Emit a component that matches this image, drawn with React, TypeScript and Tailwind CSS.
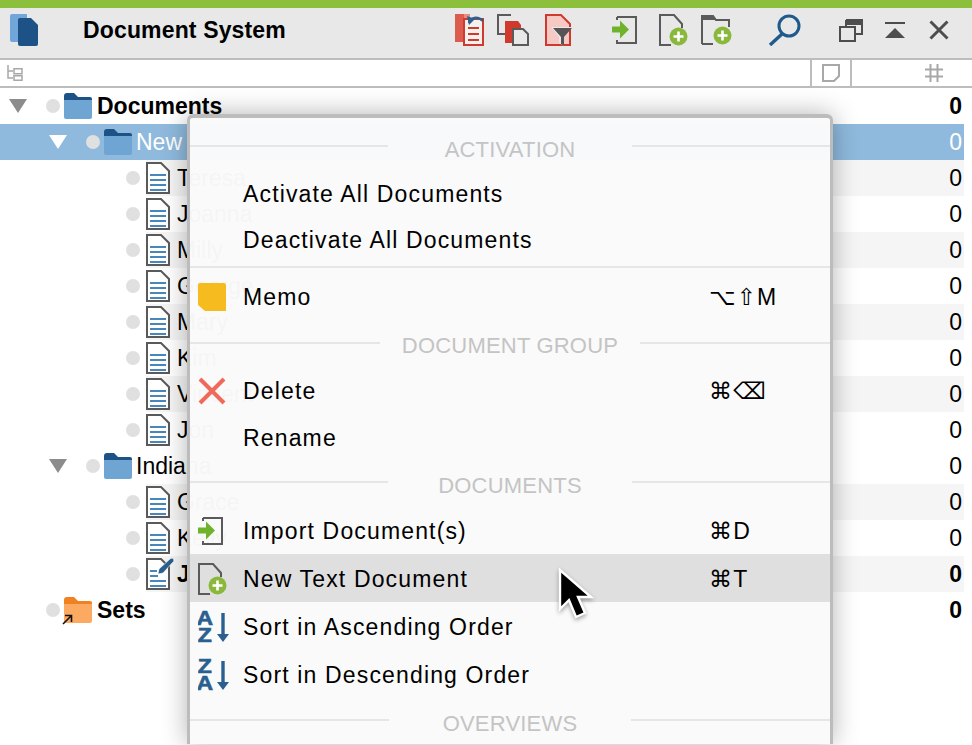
import type { ReactNode } from "react";

const FONT = "font-['Liberation_Sans','DejaVu_Sans',sans-serif]";

type Row = {
  name: string;
  kind: "folder" | "doc" | "memoDoc" | "sets";
  depth: 0 | 1 | 2;
  bold?: boolean;
  stripe?: boolean;
  selected?: boolean;
};

const rows: Row[] = [
  { name: "Documents", kind: "folder", depth: 0, bold: true },
  { name: "New", kind: "folder", depth: 1, selected: true },
  { name: "Teresa", kind: "doc", depth: 2, stripe: true },
  { name: "Joanna", kind: "doc", depth: 2 },
  { name: "Milly", kind: "doc", depth: 2, stripe: true },
  { name: "George", kind: "doc", depth: 2 },
  { name: "Mary", kind: "doc", depth: 2, stripe: true },
  { name: "Kim", kind: "doc", depth: 2 },
  { name: "Vincent", kind: "doc", depth: 2, stripe: true },
  { name: "Jon", kind: "doc", depth: 2 },
  { name: "Indiana", kind: "folder", depth: 1 },
  { name: "Grace", kind: "doc", depth: 2, stripe: true },
  { name: "Kelly", kind: "doc", depth: 2 },
  { name: "Jack", kind: "memoDoc", depth: 2, bold: true, stripe: true },
  { name: "Sets", kind: "sets", depth: 0, bold: true },
];

function PlusBadge({ cx, cy }: { cx: number; cy: number }) {
  return (
    <g>
      <circle cx={cx} cy={cy} r="9" fill="#8ab83c" />
      <path d={`M${cx - 5} ${cy}h10M${cx} ${cy - 5}v10`} stroke="#fff" strokeWidth="2.6" />
    </g>
  );
}

function LogoIcon() {
  return (
    <svg width="28" height="32" viewBox="0 0 28 32">
      <path d="M0 2a2 2 0 0 1 2-2h15v28H2a2 2 0 0 1-2-2z" fill="#70a7d8" />
      <path d="M8 6a2 2 0 0 1 2-2h11l7 7v19a2 2 0 0 1-2 2H10a2 2 0 0 1-2-2z" fill="#1c5285" />
    </svg>
  );
}

function RestoreIcon() {
  return (
    <svg width="30" height="32" viewBox="0 0 30 32">
      <rect x="0" y="0" width="9" height="28" fill="#dc5a4e" />
      <path d="M9 0h6v6H9z" fill="#e88a80" />
      <path d="M9 5h19v26H9z" fill="#f4f0ef" stroke="#cf3a2c" strokeWidth="2" />
      <path d="M13 14h11M13 20h11M13 26h11" stroke="#cf3a2c" strokeWidth="2" />
      <path d="M14 9c1-6 9-7 14-2" fill="none" stroke="#2a5f8f" strokeWidth="2.4" />
      <path d="M12 2l8 3-6 6z" fill="#2a5f8f" />
    </svg>
  );
}

function CopyIcon() {
  return (
    <svg width="32" height="32" viewBox="0 0 32 32">
      <path d="M14 1H1v19h7" fill="none" stroke="#5a5a5a" strokeWidth="2" />
      <path d="M8 7h13l3 4v4h-9v14H8z" fill="#cf3a2c" />
      <path d="M16 15h10l5 5v11H16z" fill="#e8e8e8" stroke="#5a5a5a" strokeWidth="2" />
    </svg>
  );
}

function FilterDocIcon() {
  return (
    <svg width="27" height="32" viewBox="0 0 27 32">
      <path d="M1 1h15l9 9v21H1z" fill="#f6c9c4" stroke="#cf3a2c" strokeWidth="2" />
      <path d="M6 13h21l-8 10v9l-5-3v-6z" fill="#e8e8e8" />
      <path d="M8 14h19l-8 9v9l-3-2v-7z" fill="#555" />
    </svg>
  );
}

function ImportIcon() {
  return (
    <svg width="25" height="28" viewBox="0 0 25 28">
      <path d="M5 1h19v26H5v-3M5 1v3" fill="none" stroke="#5a5a5a" strokeWidth="2" />
      <path d="M0 11h8V5l9 9-9 9v-6H0z" fill="#6fb32c" transform="translate(0 -0.5)" />
    </svg>
  );
}

function NewDocIcon() {
  return (
    <svg width="29" height="32" viewBox="0 0 29 32">
      <path d="M12 31H1V1h14l8 9v4" fill="none" stroke="#5a5a5a" strokeWidth="2" />
      <PlusBadge cx={19.5} cy={22.5} />
    </svg>
  );
}

function NewFolderIcon() {
  return (
    <svg width="31" height="30" viewBox="0 0 31 30">
      <path d="M1 29V1h11l3 4h13v7" fill="none" stroke="#5a5a5a" strokeWidth="2" />
      <path d="M1 1h11l3 4H1z" fill="#5a5a5a" />
      <path d="M1 29h11" stroke="#5a5a5a" strokeWidth="2" />
      <PlusBadge cx={21.5} cy={20.5} />
    </svg>
  );
}

function SearchIcon() {
  return (
    <svg width="34" height="32" viewBox="0 0 34 32">
      <circle cx="21" cy="12" r="10" fill="none" stroke="#1f5a8c" strokeWidth="3" />
      <path d="M14 20L2 31" stroke="#1f5a8c" strokeWidth="3.4" />
    </svg>
  );
}

function WindowIcon() {
  return (
    <svg width="24" height="23" viewBox="0 0 24 23">
      <path d="M7 1h16v14H16" fill="#e8e8e8" stroke="#4d4d4d" strokeWidth="2" />
      <path d="M7 1v7" stroke="#4d4d4d" strokeWidth="2" />
      <path d="M1 8h15v14H1z" fill="none" stroke="#4d4d4d" strokeWidth="2" />
      <path d="M7 2h16v4H7z" fill="#4d4d4d" />
    </svg>
  );
}

function CollapseIcon() {
  return (
    <svg width="20" height="17" viewBox="0 0 20 17">
      <path d="M0 1h20" stroke="#4d4d4d" strokeWidth="2" />
      <path d="M10 6l10 10H0z" fill="#4d4d4d" />
    </svg>
  );
}

function CloseIcon() {
  return (
    <svg width="20" height="20" viewBox="0 0 20 20">
      <path d="M1.5 1.5l17 17M18.5 1.5l-17 17" stroke="#4d4d4d" strokeWidth="3" />
    </svg>
  );
}

function TreeHeaderIcon() {
  return (
    <svg width="16" height="16" viewBox="0 0 16 16">
      <path d="M1 0v13h5M1 6h5" fill="none" stroke="#a8a8a8" strokeWidth="1.5" />
      <path d="M7 3.7h8v5H7zM7 10.7h8v4.6H7z" fill="none" stroke="#a8a8a8" strokeWidth="1.5" />
    </svg>
  );
}

function NoteHeaderIcon() {
  return (
    <svg width="18" height="18" viewBox="0 0 18 18">
      <path d="M1 1h16v11l-5 5H1z" fill="none" stroke="#a8a8a8" strokeWidth="2" />
    </svg>
  );
}

function HashHeaderIcon() {
  return (
    <svg width="18" height="18" viewBox="0 0 18 18">
      <path d="M5.5 0v18M12.5 0v18M0 5.5h18M0 12.5h18" stroke="#a8a8a8" strokeWidth="2" />
    </svg>
  );
}

function FolderIcon({ back = "#1c5285", front = "#6fa5d3" }: { back?: string; front?: string }) {
  return (
    <svg width="28" height="26" viewBox="0 0 28 26" className="shrink-0">
      <path d="M0 3a3 3 0 0 1 3-3h7l4 4h12a2 2 0 0 1 2 2v4H0z" fill={back} />
      <path d="M0 7h28v17a2 2 0 0 1-2 2H2a2 2 0 0 1-2-2z" fill={front} />
    </svg>
  );
}

function SetsIcon() {
  return (
    <div className="relative shrink-0">
      <FolderIcon back="#ef8120" front="#fca961" />
      <svg width="11" height="11" viewBox="0 0 11 11" className="absolute left-[-2px] top-[17px]">
        <path d="M1 10L9 2M3 1.5h6.5V8" fill="none" stroke="#111" strokeWidth="1.6" />
      </svg>
    </div>
  );
}

function DocIcon() {
  return (
    <svg width="24" height="32" viewBox="0 0 24 32" className="shrink-0">
      <path d="M1 1h14l8 8v22H1z" fill="#fff" stroke="#5a5a5a" strokeWidth="2" />
      <path d="M4 13h16M4 18h16M4 23h16M4 28h16" stroke="#4a86b8" strokeWidth="1.8" />
    </svg>
  );
}

function MemoDocIcon() {
  return (
    <svg width="28" height="32" viewBox="0 0 28 32" className="shrink-0">
      <path d="M1 1h14l8 8v22H1z" fill="#fff" stroke="#5a5a5a" strokeWidth="2" />
      <path d="M4 13h7M4 18h8M4 23h16M4 28h16" stroke="#4a86b8" strokeWidth="1.8" />
      <path d="M12 16l1-5L24 1c2-1.5 4.500-.5 3.500 2.500L17 15z" fill="#2a5f8f" stroke="#fff" strokeWidth="0.6" />
    </svg>
  );
}

function TreeRow({ row }: { row: Row }) {
  const triangle = row.kind === "folder";
  const indent = row.depth === 0 ? "pl-[9px]" : row.depth === 1 ? "pl-[49px]" : "pl-[126px]";
  const rowBg = row.selected ? "bg-[#8fbadd]" : "";
  const labelBg = row.stripe ? "bg-[#f5f5f5]" : "";
  const text = row.selected ? "text-white" : "text-black";
  const isDoc = row.depth === 2;

  return (
    <div className={`flex h-9 w-[964px] items-center ${indent} ${rowBg} ${text}`}>
      {triangle && (
        <svg width="18" height="14" viewBox="0 0 18 14" className="mr-[19px] shrink-0">
          <path d="M0 0h18L9 14z" fill={row.selected ? "#fff" : "#8c8c8c"} />
        </svg>
      )}
      {row.kind === "sets" && <div className="w-[37px] shrink-0" />}
      <div className="h-[14px] w-[14px] shrink-0 rounded-full bg-[#e0e0e0]" />
      <div className={`flex h-full flex-1 items-center ${isDoc ? "ml-[6px]" : "ml-[4px]"} ${labelBg}`}>
        {row.kind === "folder" && <FolderIcon />}
        {row.kind === "sets" && <SetsIcon />}
        {row.kind === "doc" && <DocIcon />}
        {row.kind === "memoDoc" && <MemoDocIcon />}
        <span
          className={`${row.kind === "memoDoc" ? "ml-[3px]" : isDoc ? "ml-[7px]" : row.depth === 1 ? "ml-[4px]" : "ml-[5px]"} flex-1 ${row.bold ? "font-bold" : ""}`}
        >
          {row.name}
        </span>
        <span className={`pr-[2px] ${row.bold ? "font-bold" : ""}`}>0</span>
      </div>
    </div>
  );
}

function MenuHeader({
  label,
  line,
  box = "h-12",
  offset = "pt-[7px]",
}: {
  label: string;
  line: string;
  box?: string;
  offset?: string;
}) {
  return (
    <div className={`flex items-center justify-between ${box}`}>
      <div className={`h-[2px] ${line} bg-[#e6e6e6]`} />
      <span className={`${offset} text-[22px] tracking-[0.2px] text-[#c4c4c4]`}>{label}</span>
      <div className={`h-[2px] ${line} bg-[#e6e6e6]`} />
    </div>
  );
}

function MenuItem({
  icon,
  label,
  shortcut,
  active,
  box = "h-[46px]",
}: {
  icon?: ReactNode;
  label: string;
  shortcut?: string;
  active?: boolean;
  box?: string;
}) {
  return (
    <div
      className={`grid ${box} grid-cols-[53px_466px_1fr] items-center text-[23px] tracking-[1.15px] text-black ${active ? "bg-[#dfdfdf]" : ""}`}
    >
      <div className="flex items-center pl-[8px]">{icon}</div>
      <span>{label}</span>
      <span>{shortcut}</span>
    </div>
  );
}

function SortIcon({ top, bottom }: { top: string; bottom: string }) {
  return (
    <svg width="32" height="41" viewBox="0 -4 32 41">
      <g fill="#2a5f8f" fontFamily="Liberation Sans" fontWeight="700" fontSize="19.5" textAnchor="middle">
        <text transform="translate(7.5 14) scale(1.18 1)" stroke="#2a5f8f" strokeWidth="0.6">{top}</text>
        <text transform="translate(7.5 31) scale(1.18 1)" stroke="#2a5f8f" strokeWidth="0.6">{bottom}</text>
      </g>
      <path d="M25 2v24" stroke="#2a5f8f" strokeWidth="3.4" />
      <path d="M19 23h12l-6 8z" fill="#2a5f8f" />
    </svg>
  );
}

function MemoIcon() {
  return (
    <svg width="28" height="28" viewBox="0 0 28 28">
      <path d="M2 0h24a2 2 0 0 1 2 2v26H7l-7-6V2a2 2 0 0 1 2-2z" fill="#f6bb1e" />
    </svg>
  );
}

function DeleteIcon() {
  return (
    <svg width="28" height="28" viewBox="0 0 28 28">
      <path d="M2 2l24 24M26 2L2 26" stroke="#ef6a5a" strokeWidth="4" />
    </svg>
  );
}

function Cursor() {
  return (
    <svg
      width="36"
      height="56"
      viewBox="0 0 36 56"
      className="absolute left-[558px] top-[568px] drop-shadow-[0_2px_2px_rgba(0,0,0,0.35)]"
    >
      <path d="M2 2v39l9-9 7 17 9-4-7-16h13z" fill="#000" stroke="#fff" strokeWidth="2.4" />
    </svg>
  );
}

function ContextMenu() {
  return (
    <div className="absolute left-[187px] top-[114px] w-[646px] rounded-t-[6px] border-x-[3px] border-t-4 border-[#bcbcbc] bg-[#fafafa]/[0.98] pt-1 shadow-[0_0_26px_rgba(0,0,0,0.3)]">
      <MenuHeader label="ACTIVATION" line="w-[198px]" />
      <div className="h-[1px]" />
      <MenuItem label="Activate All Documents" />
      <MenuItem label="Deactivate All Documents" />
      <div className="mt-[3px] h-[2px] bg-[#e6e6e6]" />
      <div className="h-[6px]" />
      <MenuItem icon={<MemoIcon />} label="Memo" shortcut="⌥⇧M" />
      <MenuHeader label="DOCUMENT GROUP" line="w-[190px]" box="mb-[2px] h-[46px]" offset="pt-[5px]" />
      <MenuItem icon={<DeleteIcon />} label="Delete" shortcut="⌘⌫" />
      <MenuItem label="Rename" box="h-[47px] pt-[2px]" />
      <MenuHeader label="DOCUMENTS" line="w-[198px]" box="-mt-[3px] h-12" />
      <MenuItem icon={<ImportIcon />} label="Import Document(s)" shortcut="⌘D" box="h-12 pt-[2px]" />
      <MenuItem icon={<NewDocIcon />} label="New Text Document" shortcut="⌘T" active box="h-12 pt-[2px]" />
      <MenuItem icon={<SortIcon top="A" bottom="Z" />} label="Sort in Ascending Order" box="h-12 pt-[2px]" />
      <MenuItem icon={<SortIcon top="Z" bottom="A" />} label="Sort in Descending Order" box="h-12 pt-[2px]" />
      <MenuHeader label="OVERVIEWS" line="w-[199px]" box="-mt-[2px] h-12" />
    </div>
  );
}

export default function App() {
  return (
    <div className={`relative h-[745px] w-[972px] overflow-hidden bg-white text-[23px] leading-none text-black ${FONT}`}>
      <div className="h-2 bg-[#8cbf3c]" />

      <div className="flex h-[50px] items-center bg-[#e8e8e8] pb-[6px]">
        <div className="ml-[10px]"><LogoIcon /></div>
        <span className="ml-[45px] font-bold tracking-[0.15px]">Document System</span>
        <div className="ml-[169px]"><RestoreIcon /></div>
        <div className="ml-[12px]"><CopyIcon /></div>
        <div className="ml-[16px]"><FilterDocIcon /></div>
        <div className="ml-[40px]"><ImportIcon /></div>
        <div className="ml-[22px]"><NewDocIcon /></div>
        <div className="ml-[13px]"><NewFolderIcon /></div>
        <div className="ml-[36px]"><SearchIcon /></div>
        <div className="ml-[37px]"><WindowIcon /></div>
        <div className="ml-[22px]"><CollapseIcon /></div>
        <div className="ml-[24px]"><CloseIcon /></div>
      </div>

      <div className="flex h-[30px] items-center border-y-2 border-[#bdbdbd]">
        <div className="flex h-full w-[810px] items-center pl-[7px]"><TreeHeaderIcon /></div>
        <div className="flex h-full w-[42px] items-center justify-center border-x-2 border-[#bdbdbd]"><NoteHeaderIcon /></div>
        <div className="flex h-full flex-1 items-center pl-[73px]"><HashHeaderIcon /></div>
      </div>

      <div className="flex flex-col">
        {rows.map((row) => (
          <TreeRow key={row.name} row={row} />
        ))}
      </div>

      <ContextMenu />
      <Cursor />
    </div>
  );
}
